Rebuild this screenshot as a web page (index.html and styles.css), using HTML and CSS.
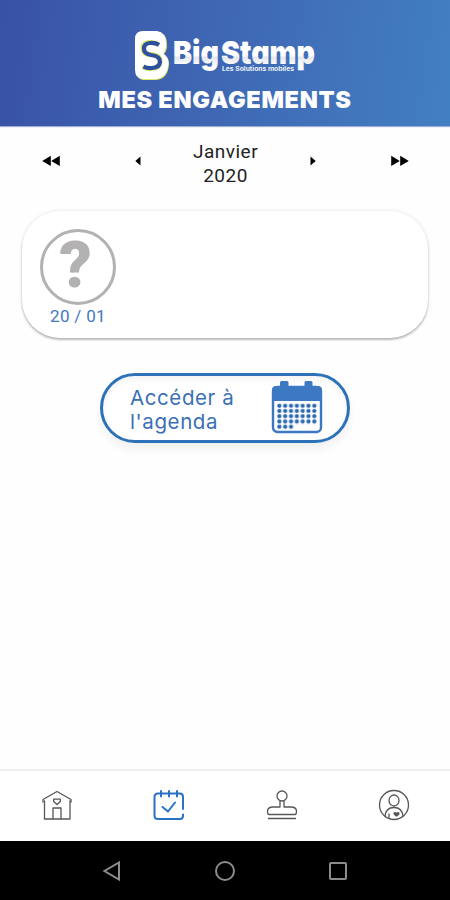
FILE: index.html
```html
<!DOCTYPE html>
<html lang="fr">
<head>
<meta charset="utf-8">
<title>Mes engagements</title>
<link rel="stylesheet" href="styles.css">
</head>
<body>
<div class="app">
  <header class="header">
    <svg class="logo" width="184" height="54" viewBox="133 28 184 54">
      <defs>
        <linearGradient id="shine" x1="0" y1="0" x2="0" y2="1">
          <stop offset="0.58" stop-color="#fff"/>
          <stop offset="0.62" stop-color="#e4e7ee"/>
          <stop offset="0.85" stop-color="#fff"/>
        </linearGradient>
      </defs>
      <path d="M144 32H158Q167 33 167 45Q167 51 164 54Q169 58 169 64Q168 79 156 80H143Q136 79 136 71V40Q136 32 144 32Z" fill="#dce96b"/>
      <path d="M143 31H157Q166 32 166 44Q166 50 163 53.500Q168.500 57 168.500 63Q167.500 78 155 79H143Q135 78 135 70V39Q135 31 143 31Z" fill="#fff"/>
      <path d="M158.500 44.500Q155 42 149 42.500Q143 43 143 48.500Q143 54 150 54.500Q160 55 160 61Q160 68 152 68.500Q146 69 143 66.500" fill="none" stroke="#dce96b" stroke-width="5"/>
      <path d="M159 45Q155.500 42.500 150 43Q144 43.500 144 48.500Q144 54 151 55Q160 56 160 61.500Q160 67.500 152 68Q147 68.500 143.500 66.500" fill="none" stroke="#2c4f9e" stroke-width="4.200"/>
      <text class="brand" x="173" y="64" textLength="46" lengthAdjust="spacingAndGlyphs" fill="url(#shine)">Big</text>
      <text class="brand" x="221" y="64" textLength="94" lengthAdjust="spacingAndGlyphs" fill="url(#shine)">Stamp</text>
      <text class="tagline" x="222" y="71" textLength="72" lengthAdjust="spacingAndGlyphs">Les Solutions mobiles</text>
    </svg>
    <h1 class="title">MES ENGAGEMENTS</h1>
  </header>

  <div class="month-nav">
    <svg width="18" height="12" viewBox="0 0 18 12"><path d="M8.800 .8V11L.2 6ZM17.800 .8V11L9.200 6Z"/></svg>
    <svg width="6" height="10" viewBox="0 0 6 10"><path d="M5.500 .5V9.500L.3 5Z"/></svg>
    <div class="month">Janvier<br>2020</div>
    <svg width="6" height="10" viewBox="0 0 6 10"><path d="M.5 .5V9.500L5.700 5Z"/></svg>
    <svg width="18" height="12" viewBox="0 0 18 12"><path d="M.2 .8V11L8.800 6ZM9.200 .8V11L17.800 6Z"/></svg>
  </div>

  <section class="card">
    <div class="event">
      <div class="stamp">?</div>
      <div class="date">20 / 01</div>
    </div>
  </section>

  <div class="agenda">
    <span class="agenda-label">Accéder à<br>l'agenda</span>
    <svg width="52" height="54" viewBox="0 0 52 54">
      <defs>
        <pattern id="dots" x="6" y="23.500" width="5.830" height="5.250" patternUnits="userSpaceOnUse">
          <rect x=".3" y=".3" width="4.100" height="3.900" rx="1.500" fill="#2c68b2"/>
        </pattern>
      </defs>
      <rect x="2" y="7" width="48" height="45" rx="4.500" fill="#fff" stroke="#3a78c0" stroke-width="2.400"/>
      <path d="M1 21V10Q1 6 5 6H9V2.500Q9 1 10.500 1H16Q17.500 1 17.500 2.500V6H33.500V2.500Q33.500 1 35 1H40Q41.500 1 41.500 2.500V6H47Q51 6 51 10V21Z" fill="#3c79c2"/>
      <path d="M6 23.500H46V44.300H23V49.500H6Z" fill="url(#dots)"/>
    </svg>
  </div>

  <nav class="tabs">
    <svg width="34" height="34" viewBox="0 0 34 34" class="tab">
      <path d="M3 13V10.500L17 2.500L31 10.500V13M4.500 12V30H30V12M13 30V19H21V30M17 15.500L13.700 12.500V10.200H20.300V12.500Z"/>
    </svg>
    <svg width="34" height="34" viewBox="0 0 34 34" class="tab tab-active">
      <path d="M31 20V8Q31 4.500 28 4.500H6Q2.500 4.500 2.500 8V26.500Q2.500 30 6 30H28Q31 30 31 26.500V25.500M9 2V7.500M17 2V7.500M25 2V7.500M10.500 18L16 22.500L23 13.500"/>
    </svg>
    <svg width="34" height="34" viewBox="0 0 34 34" class="tab">
      <circle cx="17" cy="7" r="5"/>
      <path d="M15 12V18H7Q2.500 18.500 2.500 22.500Q2.500 25.500 4 25.500H30Q31.500 25.500 31.500 22.500Q31.500 18.500 27 18H19V12M3.500 29.500H30.500"/>
    </svg>
    <svg width="34" height="34" viewBox="0 0 34 34" class="tab">
      <circle cx="17" cy="16" r="14.500"/>
      <ellipse cx="17" cy="11.500" rx="5" ry="5.500"/>
      <path d="M8 27Q9 18.500 17 18.500Q25 18.500 26 27M12 25V29"/>
      <path class="heart" d="M19.500 27L17.200 25.200V23.800H18.700L19.500 24.400L20.300 23.800H21.800V25.200Z"/>
    </svg>
  </nav>

  <div class="system">
    <svg width="20" height="22" viewBox="0 0 20 22"><path d="M17 2.500V19.500L2.500 11Z"/></svg>
    <svg width="22" height="22" viewBox="0 0 22 22"><circle cx="11" cy="11" r="9"/></svg>
    <svg width="20" height="20" viewBox="0 0 20 20"><rect x="2" y="2" width="16" height="16" rx="1"/></svg>
  </div>
</div>
</body>
</html>
```
FILE: styles.css
```css
* { box-sizing: border-box; }
body { margin: 0; background: #fff; font-family: Roboto, sans-serif; }
.app { width: 450px; height: 900px; display: flex; flex-direction: column; background: #fefefe; }
.header {
  height: 126px;
  padding-top: 28px;
  display: flex;
  flex-direction: column;
  align-items: center;
  background: linear-gradient(98deg, #3952a6 0%, #3f68b4 50%, #427fc2 100%);
  box-shadow: 0 1px 1px #9fb0d2;
}
.logo { display: block; flex: none; overflow: visible; }
.brand { font: 900 32px Inter, sans-serif; font-feature-settings: "cv11"; }
.tagline { font: 700 6.5px Inter, sans-serif; fill: #eef2fa; }
.title {
  margin: 4px 0 0;
  color: #fff;
  font: 900 23.5px/28px Inter, sans-serif;
  letter-spacing: .7px;
  white-space: nowrap;
}
.month-nav {
  height: 68px;
  padding: 1px 41px 0 42px;
  display: grid;
  grid-template-columns: 93px 50px 1fr 50px 93px;
  align-items: center;
}
.month-nav svg:nth-of-type(2) { justify-self: start; }
.month-nav svg:nth-of-type(3) { justify-self: end; }
.month-nav svg:nth-of-type(4) { justify-self: end; }
.month { padding-top: 6px; text-align: center; font-size: 19px; line-height: 24px; letter-spacing: .5px; color: #222; white-space: nowrap; justify-self: center; }
.card {
  height: 127px;
  margin: 17px 22px 0;
  padding: 18px;
  border-radius: 38px;
  background: #fff;
  box-shadow: 0 2px 2px #bbb, 0 0 4px #e4e4e4;
}
.event { width: 76px; text-align: center; }
.stamp {
  height: 76px;
  padding-right: 5px;
  border: 3px solid #b3b1b2;
  border-radius: 50%;
  color: #b3b1b2;
  font: 900 64px/68px Roboto, sans-serif;
}
.date { color: #4279c0; font-size: 17px; line-height: 22px; letter-spacing: .3px; }
.agenda {
  width: 250px;
  height: 70px;
  margin: 35px 0 0 100px;
  padding: 0 24px 2px 27px;
  display: flex;
  align-items: center;
  justify-content: space-between;
  border: 3px solid #2d72b9;
  border-radius: 35px;
  background: #fff;
  box-shadow: 0 6px 8px #f1f1f1, inset 0 4px 6px #f4f4f4;
}
.agenda-label { padding-top: 5px; color: #3b6fb5; font: 400 20.5px/24px Inter, sans-serif; letter-spacing: .6px; white-space: nowrap; }
.tabs {
  height: 72px;
  margin-top: auto;
  padding-left: 1px;
  border-top: 2px solid #eee;
  display: grid;
  grid-template-columns: repeat(4, 1fr);
  place-items: center;
  background: #fff;
}
.tab { fill: none; stroke: #575757; stroke-width: 1.3; stroke-linejoin: round; stroke-linecap: round; }
.tab-active { stroke: #2a72c4; stroke-width: 2; }
.heart { fill: #555; }
.system {
  height: 59px;
  padding: 0 56px;
  display: grid;
  grid-template-columns: repeat(3, 1fr);
  place-items: center;
  background: #000;
}
.system svg { fill: none; stroke: #8c8c8c; stroke-width: 2; }
```
